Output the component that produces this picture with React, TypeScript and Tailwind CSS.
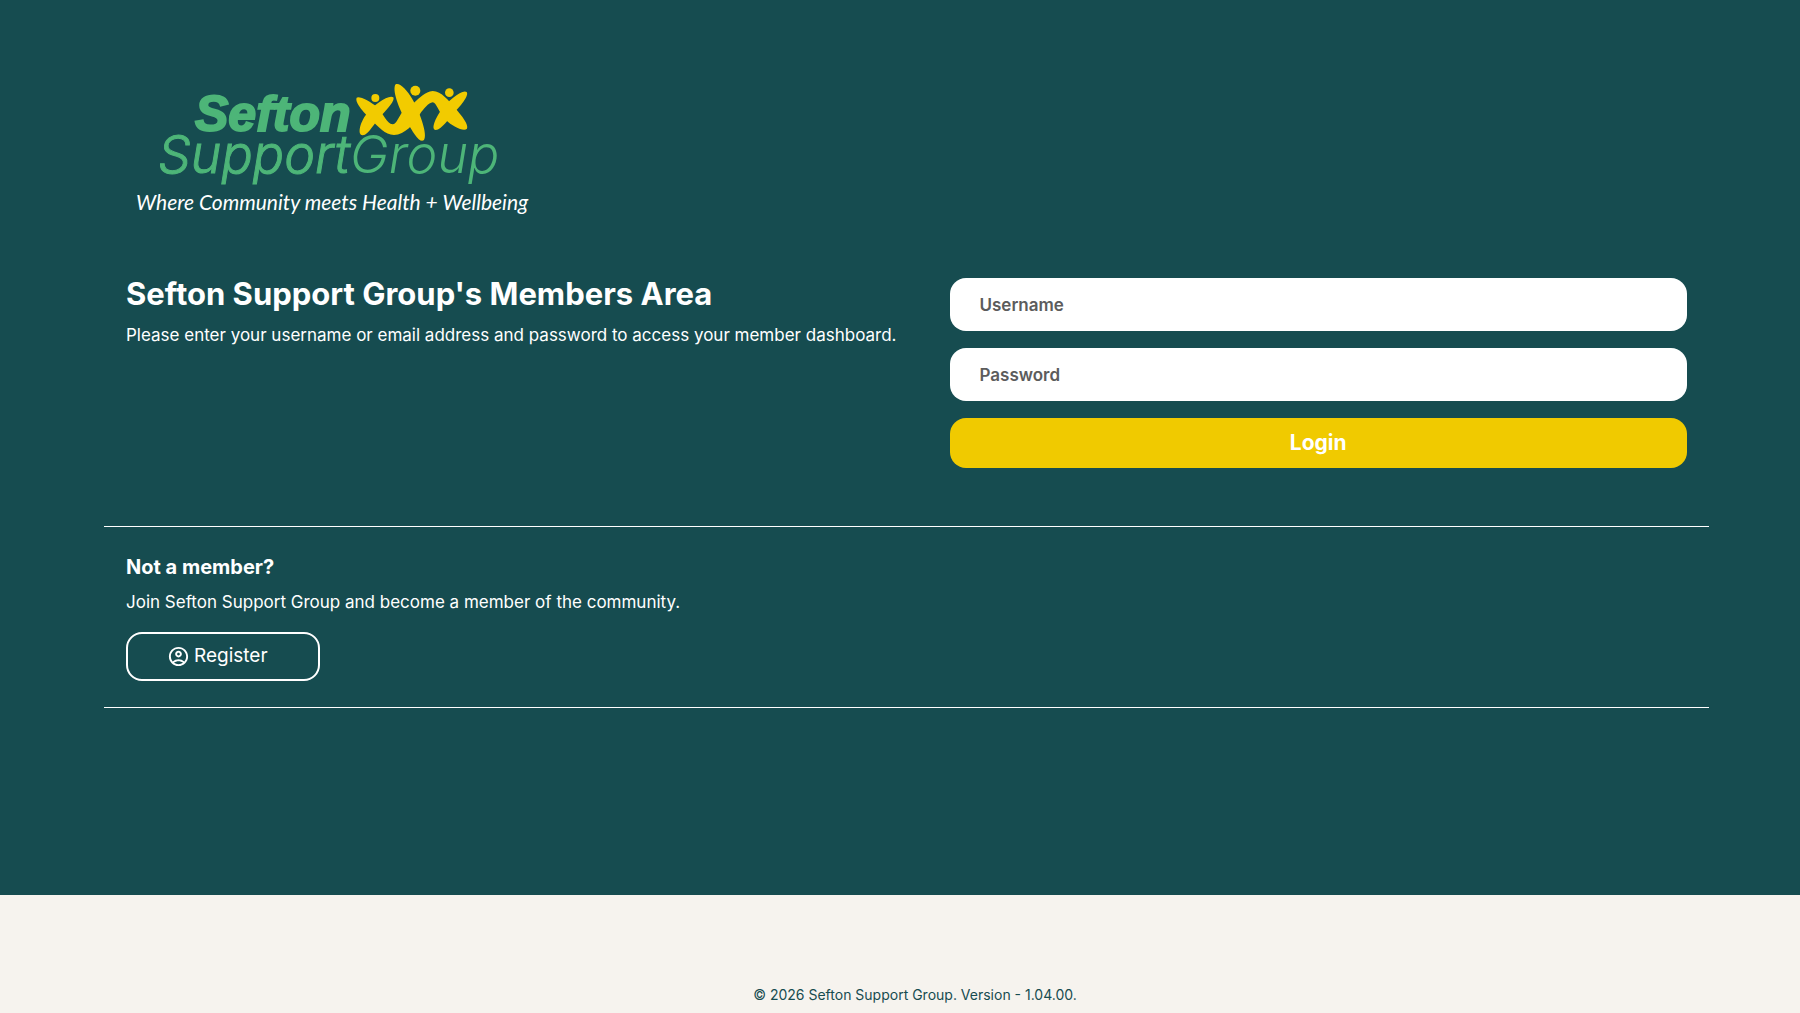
import { MdOutlineAccountCircle } from "react-icons/md";

function Logo() {
  return (
    <svg
      viewBox="0 0 420 160"
      role="img"
      aria-label="Sefton Support Group"
      className="h-40 w-[420px] max-w-full"
    >
      <g fill="#4db578" stroke="#4db578" className="font-['Inter'] italic">
        <text
          x="75"
          y="61"
          strokeWidth="2"
          className="font-['Liberation_Sans'] text-[50px] font-bold"
        >
          Sefton
        </text>
        <text x="38" y="103" strokeWidth="1" className="text-[52px] font-light">
          Support
          <tspan strokeWidth="0" className="font-light">Group</tspan>
        </text>
      </g>
      <text x="16" y="140" fill="#ffffff" className="font-['Lato'] text-[21px] italic">
        Where Community meets Health + Wellbeing
      </text>
      <g transform="scale(0.33333)" fill="#f2cb00">
        <circle cx="766" cy="84" r="12" />
        <circle cx="886" cy="62" r="15" />
        <circle cx="988" cy="68" r="13" />
        <path d="M820 82C826 91 802 118 786 134C762 158 747 194 728 196C712 196 718 160 741 130C762 104 807 72 820 82Z" />
        <path d="M710 83C716 76 752 94 770 110C790 128 800 162 818 163C830 163 836 138 850 122C862 108 872 106 882 98C900 82 915 66 938 63C965 64 986 92 1006 115C1026 138 1047 165 1041 176C1032 186 998 170 977 149C955 127 950 98 938 97C926 98 910 118 900 132C882 162 855 194 822 195C795 194 775 170 757 153C736 132 703 98 710 83Z" />
        <path d="M827 43C840 37 862 62 875 84C896 118 926 196 911 211C898 220 878 184 862 158C836 118 815 58 827 43Z" />
        <path d="M1040 66C1048 76 1023 106 1008 122C986 146 965 178 947 180C932 178 946 145 965 118C983 93 1028 56 1040 66Z" />
      </g>
    </svg>
  );
}

const inputClass =
  "h-[53px] w-full rounded-2xl bg-white px-[30px] text-[17px] font-semibold text-[#5c5c5c] placeholder:text-[#5c5c5c] placeholder:opacity-100";

export default function App() {
  return (
    <div className="flex min-h-screen flex-col bg-[#f6f3ee] font-['Inter',sans-serif] text-white">
      <main className="bg-[#164c50] pt-[70px] pr-[91px] pb-[187px] pl-[104px]">
        <header className="px-4">
          <Logo />
        </header>

        <section className="mt-12 grid grid-cols-2 gap-[22px] px-[22px] pb-[58px]">
          <div>
            <h1 className="text-[31px] leading-8 font-bold">
              Sefton Support Group's Members Area
            </h1>
            <p className="mt-[13px] text-[17px] leading-6 whitespace-nowrap">
              Please enter your username or email address and password to access your member
              dashboard.
            </p>
          </div>
          <form className="ml-8 flex flex-col gap-[17px]" onSubmit={(e) => e.preventDefault()}>
            <input
              type="text"
              aria-label="Username"
              placeholder="Username"
              className={inputClass}
            />
            <input
              type="password"
              aria-label="Password"
              placeholder="Password"
              className={inputClass}
            />
            <button
              type="submit"
              className="h-[50px] w-full rounded-2xl bg-[#f0ca00] text-[21px] font-bold"
            >
              Login
            </button>
          </form>
        </section>

        <section className="border-y border-white px-[22px] pt-7 pb-[26px]">
          <h2 className="text-[20px] leading-6 font-bold">Not a member?</h2>
          <p className="mt-[11px] text-[17px] leading-6">
            Join Sefton Support Group and become a member of the community.
          </p>
          <a
            href="#register"
            className="mt-[18px] flex h-[49px] w-[194px] items-center gap-1 rounded-2xl border-2 border-white pl-[39px] text-[19px]"
          >
            <MdOutlineAccountCircle className="size-[23px]" />
            Register
          </a>
        </section>
      </main>

      <footer className="flex grow items-end justify-center pt-[89px] pb-2 pl-[30px] text-[14px] leading-5 text-[#164c50]">
        <p>© 2026 Sefton Support Group. Version - 1.04.00.</p>
      </footer>
    </div>
  );
}
